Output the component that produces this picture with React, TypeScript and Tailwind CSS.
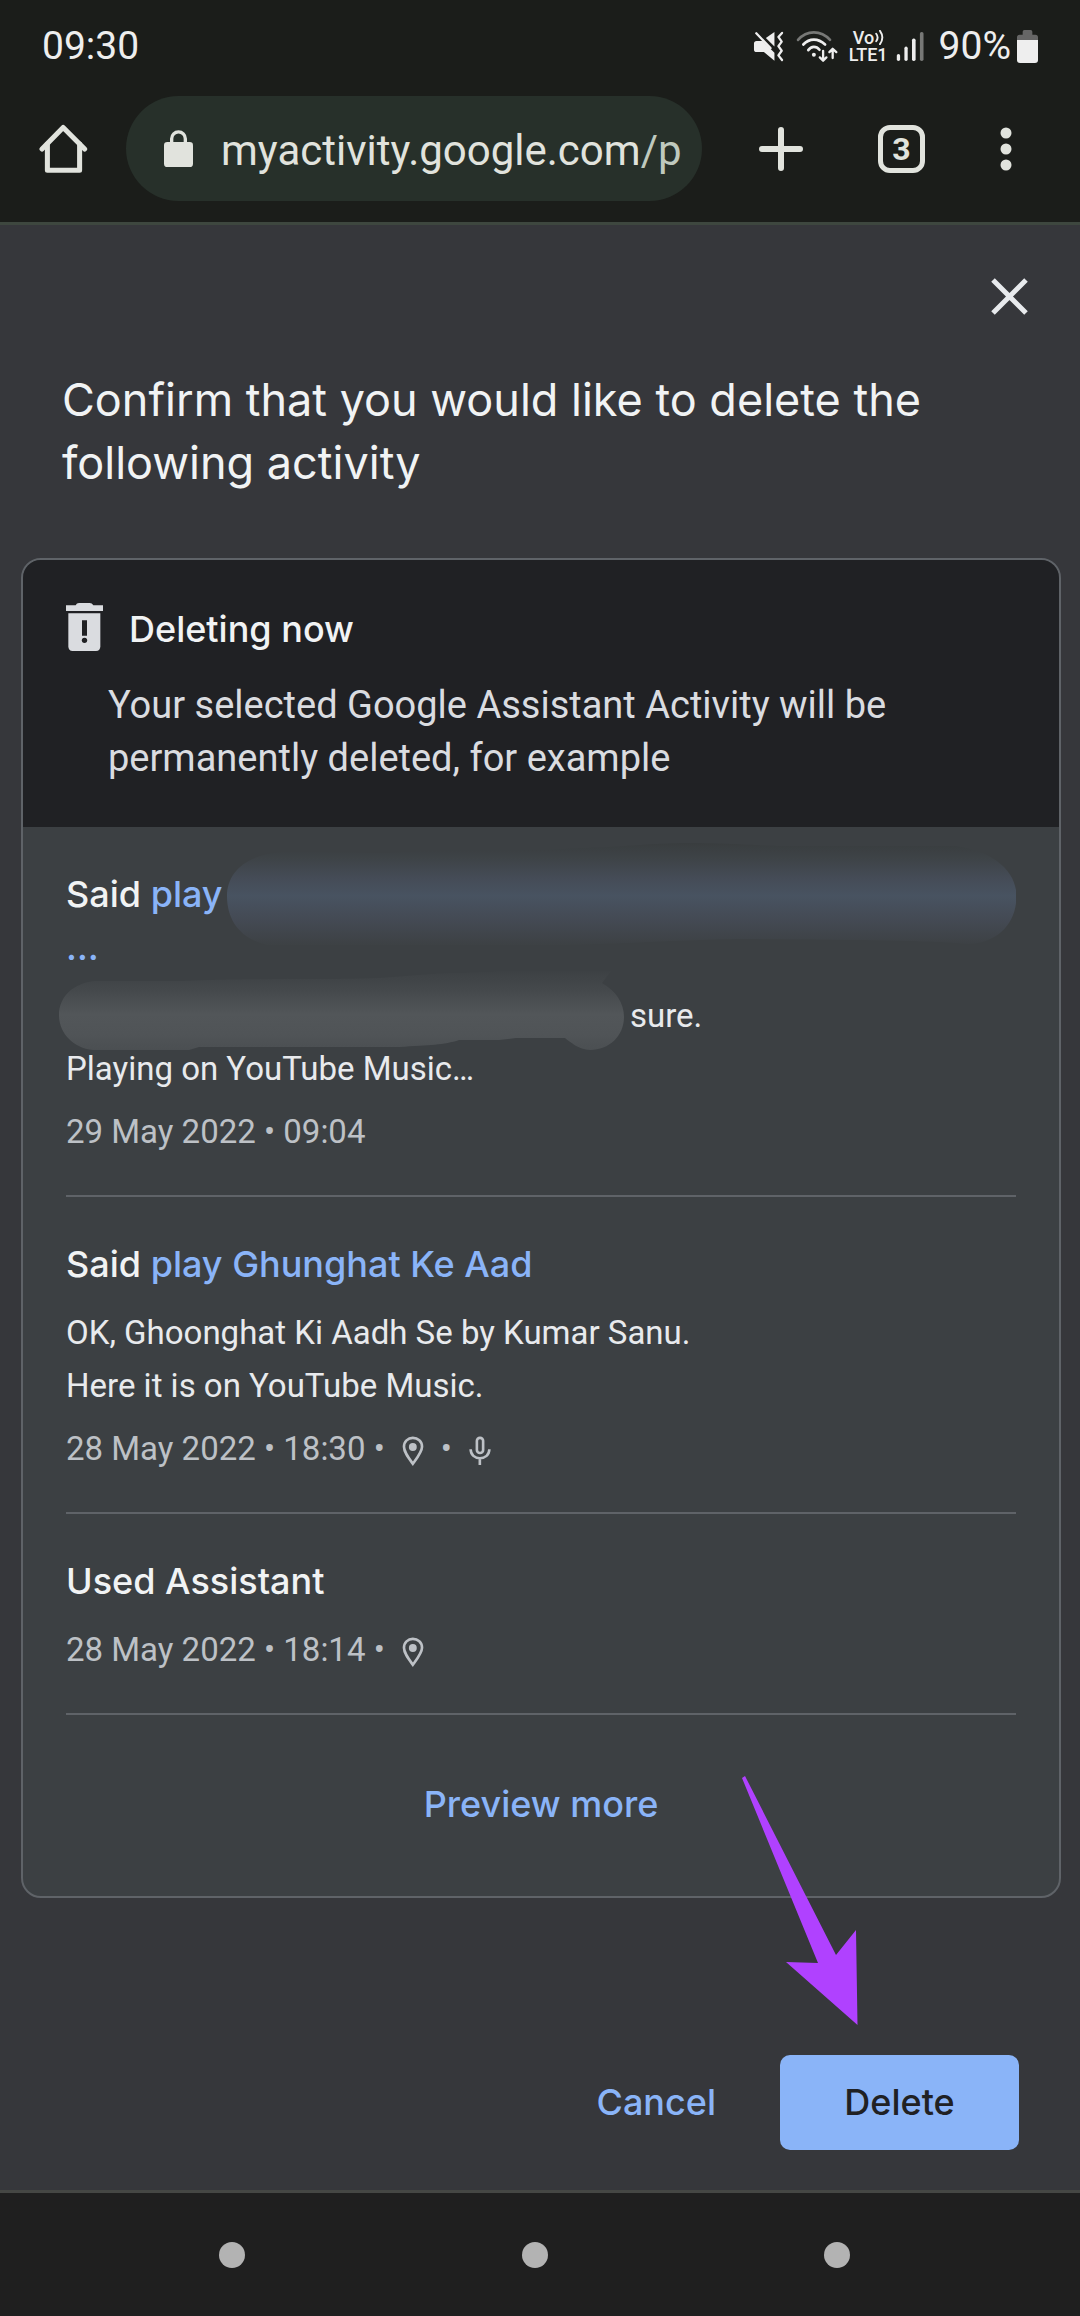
import type { ReactNode } from "react";

const sans = "font-['Inter',sans-serif]";
const title = `${sans} text-[36px] leading-[53px] font-medium`;

function MuteIcon() {
  return (
    <svg viewBox="32 60 92 100" className="h-[33px] w-[31px]" aria-label="Muted">
      <path d="M60 93L96 129V153L64 127H42Q34 127 34 119V101Q34 93 42 93Z" fill="#eee" />
      <path d="M70 84L96 66V110Z" fill="#eee" />
      <path d="M41 70L84 115" stroke="#eee" strokeWidth="7" strokeLinecap="round" />
      <path d="M119 69L108 81L118 95L108 109L118 123L108 137L119 151" fill="none" stroke="#eee" strokeWidth="7" strokeLinecap="round" strokeLinejoin="round" />
    </svg>
  );
}

function WifiIcon() {
  return (
    <svg viewBox="162 60 128 100" className="ml-3 h-[33px] w-[43px]" fill="none" strokeLinecap="round" aria-label="Wi-Fi">
      <path d="M167 90Q187 67 215 67Q243 67 264 90" stroke="#777876" strokeWidth="8" />
      <path d="M183 104Q197 89 215 89Q233 89 249 104" stroke="#eee" strokeWidth="8" />
      <path d="M198 121Q205 111 215 111Q225 111 232 120" stroke="#eee" strokeWidth="8" />
      <circle cx="215" cy="135" r="6" fill="#eee" />
      <path d="M243 123V150M233 143L243 153L253 143" stroke="#eee" strokeWidth="7" strokeLinejoin="round" />
      <path d="M272 145V118M262 127L272 117L283 127" stroke="#eee" strokeWidth="7" strokeLinejoin="round" />
    </svg>
  );
}

function SignalIcon() {
  return (
    <svg viewBox="468 60 87 100" className="ml-2 h-[33px] w-[29px]" fill="#eee" aria-label="Signal strength">
      <rect x="470" y="133" width="10" height="21" rx="5" />
      <rect x="493" y="110" width="10" height="44" rx="5" />
      <rect x="516" y="86" width="11" height="68" rx="5" />
      <rect x="540" y="66" width="11" height="88" rx="5" fill="#777876" />
    </svg>
  );
}

function BatteryIcon() {
  return (
    <svg viewBox="831 60 63 99" className="ml-[6px] h-[33px] w-[21px]" aria-label="Battery">
      <path d="M831 92V82Q831 74 839 74H848V65Q848 60 853 60H872Q877 60 877 65V74H886Q894 74 894 82V92Z" fill="#666" />
      <path d="M831 90H894V150Q894 159 885 159H840Q831 159 831 150Z" fill="#eee" />
    </svg>
  );
}

function PinIcon() {
  return (
    <svg viewBox="127 77 67 90" className="mt-1 h-[30px] w-[22px]" aria-label="Location">
      <path d="M160 161C144 139 133 124 133 109C133 93 145 82 160 82C175 82 188 93 188 109C188 124 176 139 160 161Z" fill="none" stroke="#bdc1c6" strokeWidth="8" />
      <circle cx="160" cy="110" r="12" fill="#bdc1c6" />
    </svg>
  );
}

function MicIcon() {
  return (
    <svg viewBox="322 77 67 90" className="mt-1 h-[30px] w-[22px]" fill="none" stroke="#bdc1c6" strokeWidth="8" aria-label="Voice">
      <rect x="346" y="82" width="19" height="46" rx="9" />
      <path d="M327 117C327 134 340 144 355 144C371 144 384 134 384 117M355 144V165" />
    </svg>
  );
}

function Meta({ children }: { children: ReactNode }) {
  return <p className="flex items-center gap-[17px] text-[33px] leading-[53px] text-[#bdc1c6]">{children}</p>;
}

function Item({ children }: { children: ReactNode }) {
  return <li className="border-b-2 border-[#5f6368] pt-[41px] pb-[37px]">{children}</li>;
}

export default function App() {
  return (
    <div className="flex min-h-screen flex-col bg-[#36373b] font-['Roboto',sans-serif]">
      <header className="border-b-[3px] border-[#3e473f] bg-[#1b1d1a] pb-[21px]">
        <div className="flex h-24 items-center pr-[42px] pb-1 pl-[42px] text-[39px] text-[#eee]">
          <span className="mr-auto">09:30</span>
          <MuteIcon />
          <WifiIcon />
          <div className="ml-[10px] flex flex-col text-[18px] leading-[17px] font-medium">
            <span className="flex items-center pl-1">
              Vo
              <svg viewBox="0 0 11 18" className="h-[17px] w-[11px]" fill="none" stroke="#eee" strokeWidth="2" strokeLinecap="round" aria-hidden="true">
                <path d="M2 5Q5 9 2 13M6 2Q11 9 6 16" />
              </svg>
            </span>
            <span>LTE1</span>
          </div>
          <SignalIcon />
          <span className="ml-[14px]">90%</span>
          <BatteryIcon />
        </div>
        <div className="flex items-center pr-[65px] pl-[39px]">
          <button aria-label="Home">
            <svg viewBox="28 42 146 148" className="h-[50px] w-[49px]" fill="none" stroke="#e1e3dd" strokeWidth="15" strokeLinecap="round" strokeLinejoin="round">
              <path d="M37 116L100 52L164 116" />
              <path d="M53 101V179H149V101" />
            </svg>
          </button>
          <div className="ml-[38px] flex h-[105px] min-w-0 flex-1 items-center gap-7 overflow-hidden rounded-full bg-[#27302a] pl-[38px]">
            <svg viewBox="402 57 87 111" className="h-[37px] w-[29px] shrink-0" aria-label="Secure">
              <rect x="402" y="93" width="87" height="75" rx="10" fill="#e1e3dd" />
              <path d="M425 98V83a20.500 20.500 0 0 1 41 0V98" fill="none" stroke="#e1e3dd" strokeWidth="10" />
            </svg>
            <a href="#" className="pt-1 text-[42px] whitespace-nowrap text-[#e1e3dd]">
              myactivity.google.com<span className="text-[#bfc9be]">/p</span>
            </a>
          </div>
          <button aria-label="New tab" className="ml-[57px]">
            <svg viewBox="0 0 44 44" className="size-11" stroke="#e1e3dd" strokeWidth="6" strokeLinecap="round">
              <path d="M22 3V41M3 22H41" />
            </svg>
          </button>
          <button aria-label="Tabs" className="ml-[75px] flex h-12 w-[47px] items-center justify-center rounded-xl border-5 border-[#e1e3dd] text-[32px] leading-none font-bold text-[#e1e3dd]">
            3
          </button>
          <button aria-label="More options" className="ml-[72px]">
            <svg viewBox="0 0 18 44" className="h-11 w-[18px]" fill="#e1e3dd">
              <circle cx="9" cy="6" r="5.500" />
              <circle cx="9" cy="22" r="5.500" />
              <circle cx="9" cy="38" r="5.500" />
            </svg>
          </button>
        </div>
      </header>

      <main className="flex-1 border-b-[3px] border-[#454744] pt-[53px] pb-10">
        <div className="flex justify-end pr-[52px]">
          <button aria-label="Close">
            <svg viewBox="0 0 37 37" className="size-[37px]" stroke="#e8eaed" strokeWidth="5">
              <path d="M2 2L35 35M35 2L2 35" />
            </svg>
          </button>
        </div>
        <h1 className="mt-[53px] px-[62px] font-['Inter',sans-serif] text-[45px] leading-[63px] text-[#f1f3f4]">
          Confirm that you would like to delete the following activity
        </h1>

        <section className="mt-16 mr-[19px] ml-[21px] overflow-hidden rounded-[20px] border-2 border-[#5f6368] bg-[#3c4043]">
          <div className="bg-[#202124] px-[43px] pt-[43px] pb-[42px]">
            <div className="flex items-start gap-[26px]">
              <svg viewBox="78 69 111 144" className="h-12 w-[37px]" fill="#dadce0" aria-hidden="true">
                <path d="M78 76H107Q110 69 117 69H149Q156 69 160 76H189V93H78Z" />
                <path d="M85 100H181V199Q181 213 168 213H98Q85 213 85 199Z" />
                <path d="M126 121H141V167H126Z" fill="#202124" />
                <circle cx="133.500" cy="181" r="8" fill="#202124" />
              </svg>
              <h2 className={`${title} text-[#f1f3f4]`}>Deleting now</h2>
            </div>
            <p className="mt-[23px] ml-[42px] text-[38px] leading-[53px] text-[#dadce0]">
              Your selected Google Assistant Activity will be permanently deleted, for example
            </p>
          </div>

          <ul className="px-[43px]">
            <Item>
              <h3 className={`${title} text-[#f1f3f4]`}>
                <span className="flex items-center">
                  <span className="whitespace-nowrap">
                    Said <span className="text-[#8ab4f8]">play</span>
                  </span>
                  <svg viewBox="0 0 788 104" preserveAspectRatio="none" className="-my-[26px] ml-1 h-[104px] min-w-0 flex-1" aria-hidden="true">
                    <defs>
                      <linearGradient id="queryTint" x1="0" y1="0" x2="0" y2="1">
                        <stop offset="0" stopColor="#393d3f" />
                        <stop offset="0.150" stopColor="#3e4347" />
                        <stop offset="0.350" stopColor="#454c57" />
                        <stop offset="0.520" stopColor="#485361" />
                        <stop offset="0.750" stopColor="#444a54" />
                        <stop offset="1" stopColor="#3d4144" />
                      </linearGradient>
                    </defs>
                    <path d="M54 9C100 8 150 12 190 8C240 6 300 9 350 5C400 4 420 0 460 0C510 0 530 3 560 3H727C765 8 788 28 788 53C788 80 770 100 740 101C700 97 620 97 512 96C450 97 390 101 340 102H40C14 96 0 78 0 53C0 30 18 12 54 9Z" fill="url(#queryTint)" />
                  </svg>
                </span>
                <span className="block text-[#8ab4f8]">…</span>
              </h3>
              <div className="mt-[15px] text-[33px] leading-[53px] text-[#e8eaed]">
                <p className="flex items-center">
                  <svg viewBox="0 0 565 80" className="-mt-[18px] mr-[6px] -mb-[9px] -ml-[7px] h-20 w-[565px]" aria-hidden="true">
                    <defs>
                      <linearGradient id="replyTint" x1="0" y1="0" x2="0" y2="1">
                        <stop offset="0" stopColor="#3d4144" />
                        <stop offset="0.250" stopColor="#45494c" />
                        <stop offset="0.550" stopColor="#525659" />
                        <stop offset="0.800" stopColor="#505457" />
                        <stop offset="1" stopColor="#4b4f52" />
                      </linearGradient>
                    </defs>
                    <path d="M36 10H124C200 7 260 9 320 7C360 4 380 2 400 2L450 0H552L543 12C557 20 565 32 565 46C565 65 550 79 531 79C520 79 510 70 506 67H457L440 69H400C385 74 370 74 340 76H140L130 79H34C14 77 0 62 0 44C0 26 14 12 36 10Z" fill="url(#replyTint)" />
                  </svg>
                  sure.
                </p>
                <p>Playing on YouTube Music…</p>
              </div>
              <div className="mt-[10px]">
                <Meta>29 May 2022 • 09:04</Meta>
              </div>
            </Item>
            <Item>
              <h3 className={`${title} text-[#f1f3f4]`}>
                Said <span className="text-[#8ab4f8]">play Ghunghat Ke Aad</span>
              </h3>
              <div className="mt-[15px] text-[33px] leading-[53px] text-[#e8eaed]">
                <p>OK, Ghoonghat Ki Aadh Se by Kumar Sanu.</p>
                <p>Here it is on YouTube Music.</p>
              </div>
              <div className="mt-[10px]">
                <Meta>
                  28 May 2022 • 18:30 •<PinIcon />
                  <span>•</span>
                  <MicIcon />
                </Meta>
              </div>
            </Item>
            <Item>
              <h3 className={`${title} text-[#f1f3f4]`}>Used Assistant</h3>
              <div className="mt-[15px]">
                <Meta>
                  28 May 2022 • 18:14 •<PinIcon />
                </Meta>
              </div>
            </Item>
          </ul>
          <div className="flex justify-center pt-[63px] pb-[65px]">
            <button className={`${title} text-[#8ab4f8]`}>Preview more</button>
          </div>
        </section>

        <div className="mt-[157px] flex items-center justify-end gap-16 pr-[61px]">
          <button className={`${title} text-[#8ab4f8]`}>Cancel</button>
          <div className="relative">
            <button className={`${title} h-[95px] w-[239px] rounded-[10px] bg-[#8ab4f8] text-[#202124]`}>Delete</button>
            <svg viewBox="742 1777 116 250" className="pointer-events-none absolute right-[161px] bottom-[124px] h-[250px] w-[116px]" fill="#b041ff" aria-hidden="true">
              <path d="M742 1779L745 1777L836 1956L856 1931L857.500 2026L786 1963L818 1964Z" />
            </svg>
          </div>
        </div>
      </main>

      <nav className="flex h-[123px] items-center justify-between bg-[#1f1f1f] pr-[230px] pl-[219px]">
        <button aria-label="Recent apps" className="size-[26px] rounded-full bg-[#b3b3b3]" />
        <button aria-label="Home screen" className="size-[26px] rounded-full bg-[#b3b3b3]" />
        <button aria-label="Back" className="size-[26px] rounded-full bg-[#b3b3b3]" />
      </nav>
    </div>
  );
}
